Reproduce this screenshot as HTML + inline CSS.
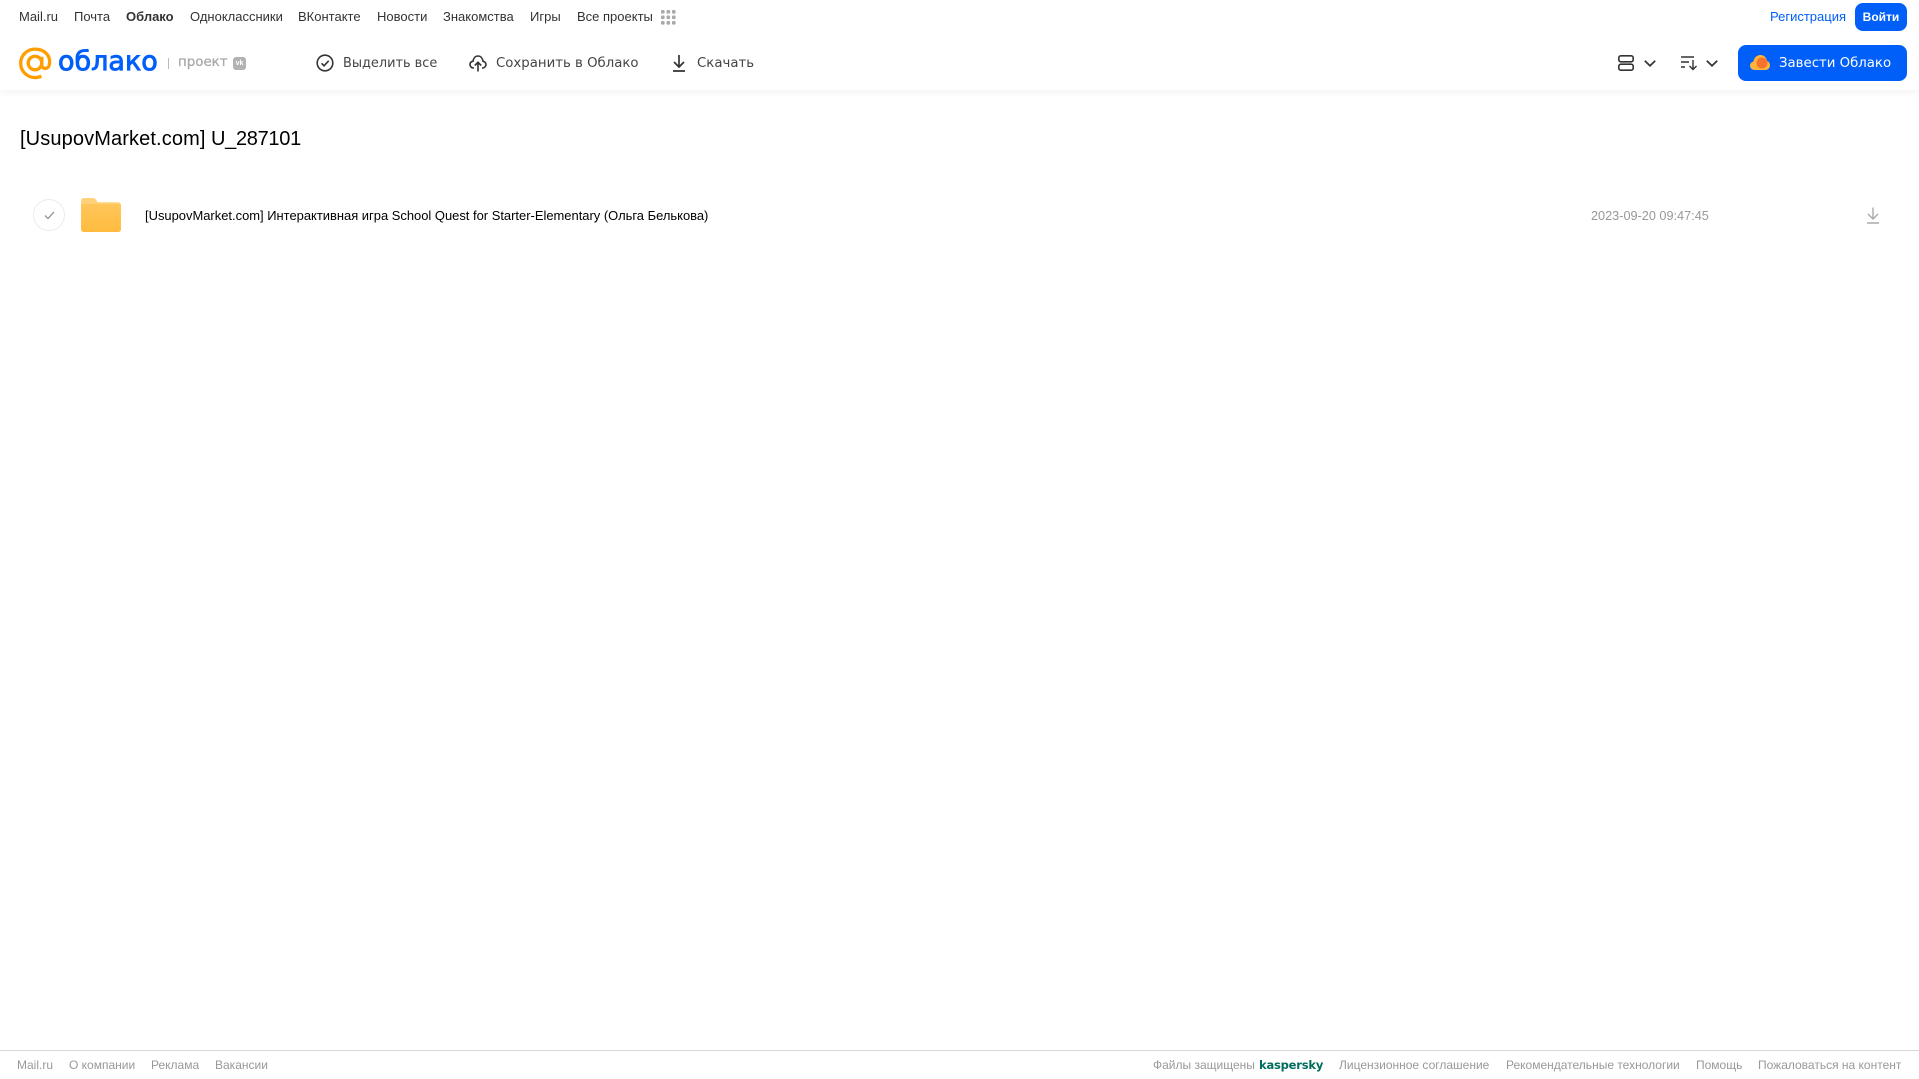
<!DOCTYPE html>
<html lang="ru"><head><meta charset="utf-8"><title>Облако</title>
<style>
html,body{margin:0;padding:0;background:#fff;width:1919px;height:1079px;overflow:hidden;font-family:"Liberation Sans",Arial,sans-serif}
.t{position:absolute;white-space:nowrap;line-height:16px}
.n{top:9px;font-size:13px;color:#333}
.b{top:56px;color:#444;font-family:"DejaVu Sans",sans-serif;font-size:13.3px}
.f{top:1057px;font-size:12px;color:#999}
#shadow{position:absolute;left:0;top:0;width:1919px;height:90px;background:#fff;box-shadow:0 2px 8px rgba(0,0,0,.06)}
svg{position:absolute;overflow:visible}
</style></head><body>
<div id="shadow"></div>
<span class="t n" style="left:19px">Mail.ru</span>
<span class="t n" style="left:74px">Почта</span>
<span class="t n" style="left:126px;font-weight:bold">Облако</span>
<span class="t n" style="left:190px">Одноклассники</span>
<span class="t n" style="left:298px">ВКонтакте</span>
<span class="t n" style="left:377px">Новости</span>
<span class="t n" style="left:443px">Знакомства</span>
<span class="t n" style="left:530px">Игры</span>
<span class="t n" style="left:577px">Все проекты</span>
<svg style="left:661px;top:10px" width="15" height="15" fill="#aaa"><rect x="0" y="0" width="3.6" height="3.6" rx="1"/><rect x="5.5" y="0" width="3.6" height="3.6" rx="1"/><rect x="11" y="0" width="3.6" height="3.6" rx="1"/><rect x="0" y="5.5" width="3.6" height="3.6" rx="1"/><rect x="5.5" y="5.5" width="3.6" height="3.6" rx="1"/><rect x="11" y="5.5" width="3.6" height="3.6" rx="1"/><rect x="0" y="11" width="3.6" height="3.6" rx="1"/><rect x="5.5" y="11" width="3.6" height="3.6" rx="1"/><rect x="11" y="11" width="3.6" height="3.6" rx="1"/></svg>
<span class="t n" style="left:1770px;color:#005ff9">Регистрация</span>
<div class="t" style="left:1855px;top:3px;width:52px;height:28px;background:#005ff9;border-radius:8px;color:#fff;font-size:12px;font-weight:bold;line-height:28px;text-align:center">Войти</div>

<svg style="left:19px;top:47px" width="33" height="33" viewBox="0 0 34 33" fill="none" stroke="#ff9e00" stroke-width="3.4"><circle cx="16.5" cy="16" r="7"/><path d="M23.5 9.5V18c0 5 7.5 5 8-1.500C32.500 7 25 1.700 16.500 1.700 8.500 1.700 1.700 8 1.700 16.200S8.500 31 16.500 31c2.500 0 4.500-.5 6.500-1.500"/></svg>
<span class="t" style="left:58px;top:43px;font:27px/38px 'DejaVu Sans',sans-serif;color:#005ff9;-webkit-text-stroke:.9px #005ff9">облако</span>
<div style="position:absolute;left:168px;top:58px;width:1px;height:11px;background:#bbb"></div>
<span class="t" style="left:178px;top:55px;font:13.4px/16px 'DejaVu Sans',sans-serif;color:#aaa;-webkit-text-stroke:.3px #aaa">проект</span>
<div class="t" style="left:233px;top:57px;width:13px;height:13px;background:#b2b2b2;border-radius:3px;color:#fff;font:bold 7px/13px 'Liberation Sans',sans-serif;text-align:center">vk</div>

<svg style="left:316px;top:54px" width="18" height="18" fill="none" stroke="#333" stroke-width="1.600"><circle cx="9" cy="9" r="7.800"/><path d="M5.500 9.300l2.500 2.500 4.700-5"/></svg>
<span class="t b" style="left:343px;font-size:12.9px">Выделить все</span>
<svg style="left:469px;top:54px" width="18" height="18" fill="none" stroke="#333" stroke-width="1.600"><path d="M5 14H4.500C2.500 14 1 12.500 1 10.500S2.500 7.500 4 7.300C4.500 4 6.500 2 9 2s4.500 2 5 5.300c1.500.2 3 1.500 3 3.200S15.500 14 13.500 14H13"/><path d="M9 17.500V8.500M5.800 11.500L9 8.300l3.200 3.200"/></svg>
<span class="t b" style="left:496px">Сохранить в Облако</span>
<svg style="left:671px;top:54px" width="16" height="18" fill="none" stroke="#333" stroke-width="1.700"><path d="M8 1v11.500M3 8l5 5 5-5M2 17h12"/></svg>
<span class="t b" style="left:697px">Скачать</span>

<svg style="left:1618px;top:55px" width="16" height="16" fill="none" stroke="#333" stroke-width="1.600"><rect x=".8" y=".8" width="14.400" height="6" rx="2"/><rect x=".8" y="9.200" width="14.400" height="6" rx="2"/></svg>
<svg style="left:1644px;top:60px" width="12" height="7" fill="none" stroke="#333" stroke-width="1.700"><path d="M.8 .8L6 5.800 11.200 .8"/></svg>
<svg style="left:1681px;top:55px" width="17" height="16" fill="none" stroke="#333" stroke-width="1.400"><path d="M0 2h13M0 7h8M0 12h4M12 5v9.500M8.500 11l3.500 3.500 3.500-3.500"/></svg>
<svg style="left:1706px;top:60px" width="12" height="7" fill="none" stroke="#333" stroke-width="1.700"><path d="M.8 .8L6 5.800 11.200 .8"/></svg>
<div style="position:absolute;left:1738px;top:45px;width:169px;height:36px;background:#005ff9;border-radius:8px"></div>
<svg style="left:1750px;top:54px" width="20" height="17"><path d="M5 16C2 16 0 14 0 11.500 0 9.500 1.500 8 3.500 7.500 4 3.500 7 1 10.500 1c3.500 0 6 2.500 6.500 6 1.700.5 3 2 3 4.300C20 14 18 16 15.500 16z" fill="#ffb43a"/><circle cx="12" cy="9" r="5.500" fill="#f5732a"/></svg>
<span class="t" style="left:1779px;top:56px;font:13.3px/16px 'DejaVu Sans',sans-serif;color:#fff">Завести Облако</span>

<span class="t" style="left:20px;top:126px;font-size:20px;line-height:26px;color:#000;letter-spacing:.12px">[UsupovMarket.com]</span>
<span class="t" style="left:211px;top:126px;font-size:20px;line-height:26px;color:#000;letter-spacing:-.3px">U_287101</span>

<div style="position:absolute;left:33px;top:199px;width:30px;height:30px;border:1px solid #ececec;border-radius:50%"></div>
<svg style="left:43.500px;top:211px" width="11" height="9" fill="none" stroke="#999" stroke-width="1.300"><path d="M1 4.500l3 3L10 1"/></svg>
<svg style="left:81px;top:198px" width="40" height="34" viewBox="0 0 41 35"><defs><linearGradient id="g" x1="0" y1="0" x2="0" y2="1"><stop offset="0" stop-color="#ffc65a"/><stop offset="1" stop-color="#ffbb3f"/></linearGradient></defs><path d="M3 0h9c3 0 3.500 2 4.500 3.500.4.600 1 .9 2 .9H38c1.500 0 3 1.200 3 3V32c0 1.700-1.300 3-3 3H3c-1.700 0-3-1.300-3-3V3C0 1.300 1.300 0 3 0z" fill="#ffd27a"/><path d="M0 6h41v26c0 1.700-1.300 3-3 3H3c-1.700 0-3-1.300-3-3z" fill="url(#g)"/></svg>
<span class="t" style="left:145px;top:208px;font-size:12.95px;color:#000">[UsupovMarket.com] Интерактивная игра School Quest for Starter-Elementary (Ольга Белькова)</span>
<span class="t" style="left:1591px;top:208px;font-size:12.7px;color:#999">2023-09-20 09:47:45</span>
<svg style="left:1866px;top:207px" width="14" height="17" fill="none" stroke="#aaa" stroke-width="1.400"><path d="M7 .5v11M2 7l5 5 5-5M1 16h12"/></svg>

<div style="position:absolute;left:0;top:1050px;width:1919px;height:1px;background:#d9d9d9"></div>
<span class="t f" style="left:17px">Mail.ru</span>
<span class="t f" style="left:69px">О компании</span>
<span class="t f" style="left:151px">Реклама</span>
<span class="t f" style="left:215px">Вакансии</span>
<span class="t f" style="left:1153px">Файлы защищены</span>
<span class="t f" style="left:1259px;color:#006d5c;font:bold 11.5px/16px 'DejaVu Sans',sans-serif;letter-spacing:-.2px">kaspersky</span>
<span class="t f" style="left:1339px">Лицензионное соглашение</span>
<span class="t f" style="left:1506px">Рекомендательные технологии</span>
<span class="t f" style="left:1696px">Помощь</span>
<span class="t f" style="left:1758px">Пожаловаться на контент</span>
</body></html>
